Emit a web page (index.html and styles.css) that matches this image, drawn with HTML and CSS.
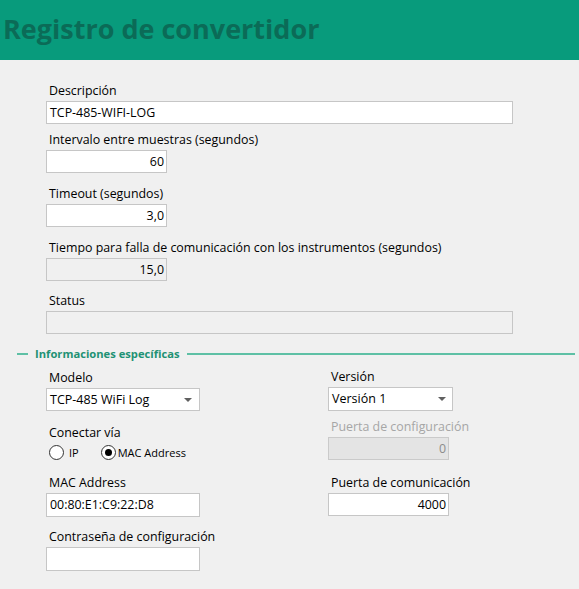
FILE: index.html
```html
<!DOCTYPE html>
<html lang="es">
<head>
<meta charset="utf-8">
<title>Registro de convertidor</title>
<link rel="stylesheet" href="styles.css">
</head>
<body>
<header class="header"><h1 class="title">Registro de convertidor</h1></header>
<main class="form">
  <div class="field">
    <label class="label">Descripción</label>
    <div class="input wide">TCP-485-WIFI-LOG</div>
  </div>
  <div class="field mt6">
    <label class="label">Intervalo entre muestras (segundos)</label>
    <div class="input num short">60</div>
  </div>
  <div class="field mt11">
    <label class="label">Timeout (segundos)</label>
    <div class="input num short">3,0</div>
  </div>
  <div class="field mt11">
    <label class="label">Tiempo para falla de comunicación con los instrumentos (segundos)</label>
    <div class="input num short ro">15,0</div>
  </div>
  <div class="field mt10">
    <label class="label">Status</label>
    <div class="input wide ro"></div>
  </div>

  <div class="section">
    <span class="sec-dash"></span>
    <span class="sec-title">Informaciones específicas</span>
    <span class="sec-line"></span>
  </div>

  <div class="cols">
    <div class="col">
      <div class="field">
        <label class="label">Modelo</label>
        <div class="input select model"><span>TCP-485 WiFi Log</span><span class="arrow"></span></div>
      </div>
      <div class="field mt12">
        <label class="label">Conectar vía</label>
        <div class="radios">
          <span class="radio"><span class="circle"></span><span class="rtext ip">IP</span></span>
          <span class="radio"><span class="circle on"></span><span class="rtext">MAC Address</span></span>
        </div>
      </div>
      <div class="field mt12">
        <label class="label">MAC Address</label>
        <div class="input tall mac">00:80:E1:C9:22:D8</div>
      </div>
      <div class="field mt10">
        <label class="label">Contraseña de configuración</label>
        <div class="input tall mac"></div>
      </div>
    </div>
    <div class="col right">
      <div class="field">
        <label class="label">Versión</label>
        <div class="input tall select version"><span>Versión 1</span><span class="arrow"></span></div>
      </div>
      <div class="field mt6">
        <label class="label disabled">Puerta de configuración</label>
        <div class="input num port dis">0</div>
      </div>
      <div class="field mt13">
        <label class="label">Puerta de comunicación</label>
        <div class="input num port">4000</div>
      </div>
    </div>
  </div>
</main>
</body>
</html>
```
FILE: styles.css
```css
* { box-sizing: border-box; }
html, body { margin: 0; padding: 0; }
body {
  background: #f0f0f0;
  font-family: "Open Sans", "Noto Sans", sans-serif;
  font-size: 12.4px;
  color: #000;
  width: 579px;
  height: 589px;
  overflow: hidden;
}
.header {
  height: 60px;
  background: #089b7c;
  display: flex;
  align-items: center;
  padding-left: 3px;
}
.title {
  margin: 0;
  font-size: 27px;
  font-weight: 700;
  color: #0b6b57;
  line-height: 1;
  padding-bottom: 3px;
}
.form {
  padding: 21px 0 0 46px;
}
.field {
  display: flex;
  flex-direction: column;
}
.mt6 { margin-top: 6px; }
.mt10 { margin-top: 10px; }
.mt11 { margin-top: 11px; }
.mt12 { margin-top: 12px; }
.mt13 { margin-top: 13px; }
.label {
  padding-left: 3px;
  line-height: 20px;
  height: 20px;
  white-space: nowrap;
}
.label.disabled { color: #a6a6a6; }
.input {
  height: 23px;
  border: 1px solid #c6c6c6;
  background: #fff;
  line-height: 21px;
  padding: 0 2px 0 3px;
  white-space: nowrap;
}
.input.tall { height: 24px; line-height: 22px; }
.wide { width: 467px; }
.short { width: 121px; }
.num { text-align: right; }
.ro { background: #f0f0f0; }
.dis { background: #e4e4e4; color: #8c8c8c; border-color: #cacaca; }
.section {
  display: flex;
  align-items: center;
  margin: 13px 0 7px -46px;
  height: 14px;
}
.sec-dash {
  width: 11px;
  height: 2px;
  background: #5ec0a5;
  margin-left: 17px;
}
.sec-title {
  font-weight: 700;
  font-size: 11.2px;
  color: #1e9274;
  margin: 0 7px;
  line-height: 14px;
}
.sec-line {
  flex: 1;
  height: 2px;
  background: #5ec0a5;
  margin-right: 4px;
}
.cols {
  display: flex;
}
.col { width: 282px; }
.right { width: auto; margin-top: -1px; }
.select {
  display: flex;
  justify-content: space-between;
  align-items: center;
  padding-right: 7px;
  font-size: 12.5px;
}
.model { width: 154px; }
.version { width: 125px; padding-right: 6px; }
.arrow {
  width: 0; height: 0;
  border-left: 4px solid transparent;
  border-right: 4px solid transparent;
  border-top: 4px solid #606060;
}
.mac { width: 154px; }
.port { width: 121px; }
.radios {
  display: flex;
  height: 18px;
  align-items: center;
  padding-left: 3px;
  font-size: 11px;
}
.radio { display: flex; align-items: center; }
.radio + .radio { margin-left: 22px; }
.rtext { margin-left: 2px; }
.rtext.ip { margin-left: 5px; }
.circle {
  width: 15px; height: 15px;
  border: 1px solid #333;
  border-radius: 50%;
  background: #fff;
  display: flex; align-items: center; justify-content: center;
}
.circle.on::after {
  content: "";
  width: 7px; height: 7px;
  border-radius: 50%;
  background: #000;
}
```
